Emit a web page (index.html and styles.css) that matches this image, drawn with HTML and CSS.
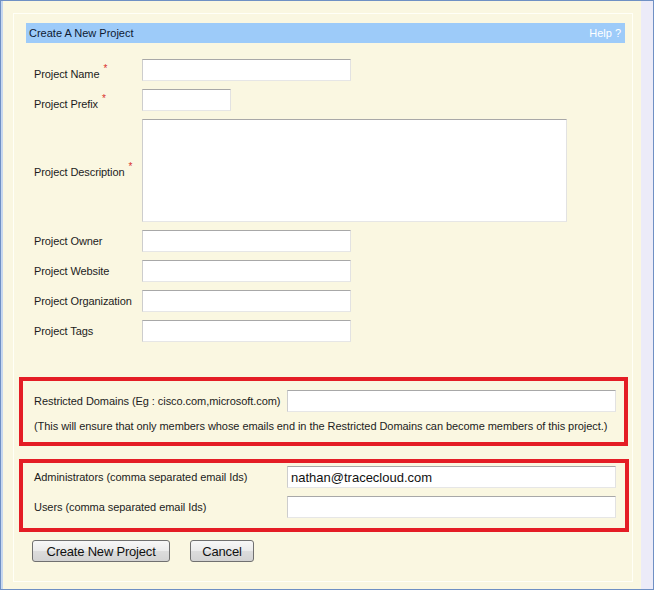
FILE: index.html
```html
<!DOCTYPE html>
<html>
<head>
<meta charset="utf-8">
<link rel="stylesheet" href="styles.css">
</head>
<body>
<div class="window">
  <div class="main">
    <div class="panel">
      <div class="header">
        <span class="title">Create A New Project</span>
        <span class="help">Help ?</span>
      </div>
      <div class="form">
        <div class="label req"><span>Project Name<span class="star">*</span></span></div>
        <div class="field"><input class="input w-md" type="text"></div>
        <div class="label req"><span>Project Prefix<span class="star">*</span></span></div>
        <div class="field"><input class="input w-sm" type="text"></div>
        <div class="label req-tall"><span>Project Description<span class="star">*</span></span></div>
        <div class="field"><textarea class="textarea"></textarea></div>
        <div class="label">Project Owner</div>
        <div class="field"><input class="input w-md" type="text"></div>
        <div class="label">Project Website</div>
        <div class="field"><input class="input w-md" type="text"></div>
        <div class="label">Project Organization</div>
        <div class="field"><input class="input w-md" type="text"></div>
        <div class="label">Project Tags</div>
        <div class="field"><input class="input w-md" type="text"></div>
      </div>
      <div class="redbox box-domains">
        <div class="boxrow">
          <div class="boxlabel">Restricted Domains (Eg : cisco.com,microsoft.com)</div>
          <input class="input w-lg" type="text">
        </div>
        <div class="note">(This will ensure that only members whose emails end in the Restricted Domains can become members of this project.)</div>
      </div>
      <div class="redbox box-members">
        <div class="boxrow">
          <div class="boxlabel">Administrators (comma separated email Ids)</div>
          <input class="input w-lg" type="text" value="nathan@tracecloud.com">
        </div>
        <div class="boxrow">
          <div class="boxlabel">Users (comma separated email Ids)</div>
          <input class="input w-lg" type="text">
        </div>
      </div>
      <div class="actions">
        <button class="btn btn-create" type="button">Create New Project</button>
        <button class="btn btn-cancel" type="button">Cancel</button>
      </div>
    </div>
  </div>
  <div class="strip"></div>
</div>
</body>
</html>
```

FILE: styles.css
```css
* { box-sizing: border-box; }
html, body { margin: 0; padding: 0; }
body {
  width: 654px;
  height: 590px;
  font-family: "Liberation Sans", Arial, sans-serif;
  font-size: 11px;
  color: #1c1c1c;
  background: #faf7e1;
  overflow: hidden;
}
.window {
  width: 654px;
  height: 590px;
  border: 1px solid #6f90c4;
  display: flex;
}
.main {
  flex: 1;
  background: #faf7e1;
  border-left: 2px solid #c6d7ef;
  padding: 12px 8px 7px 10px;
}
.strip {
  width: 12px;
  background: #ecebf8;
}
.panel {
  height: 100%;
  border: 1px solid #fffff7;
  background: #faf7e1;
  padding: 9px 4px 0 5px;
}
.header {
  height: 20px;
  margin: 0 3px 0 7px;
  background: #9dcbf9;
  display: flex;
  align-items: center;
  justify-content: space-between;
  padding: 0 4px 0 3px;
  font-size: 11px;
}
.title { color: #0e1a33; }
.help { color: #ffffff; }
.form {
  display: grid;
  grid-template-columns: 108px auto;
  row-gap: 8px;
  padding: 16px 0 0 15px;
  letter-spacing: -0.1px;
}
.label {
  display: flex;
  align-items: center;
}
.label.req { padding-top: 7px; }
.label.req-tall { padding-top: 3px; }
.star {
  color: #d9302c;
  font-size: 10px;
  line-height: 0;
  position: relative;
  top: -6px;
  margin-left: 4px;
}
.field { display: flex; }
.input, .textarea {
  height: 22px;
  border-style: solid;
  border-width: 1px;
  border-color: #a8a8a8 #e2e2e2 #e6e6e6 #cdcdcd;
  background: #ffffff;
  padding: 0 3px;
  margin: 0;
  font-family: "Liberation Sans", Arial, sans-serif;
  font-size: 13px;
  color: #111;
  outline: none;
}
.textarea { width: 425px; height: 103px; resize: none; }
.w-md { width: 209px; }
.w-sm { width: 89px; }
.w-lg { width: 329px; }
.redbox {
  border: 4px solid #e41d25;
  padding-left: 11px;
  letter-spacing: -0.06px;
}
.box-domains {
  margin-top: 35px;
  height: 69px;
  padding-top: 9px;
}
.box-members {
  margin-top: 13px;
  height: 73px;
  padding-top: 3px;
  display: flex;
  flex-direction: column;
  gap: 8px;
  margin-right: -1px;
}
.boxrow {
  display: flex;
  align-items: center;
}
.boxlabel { width: 253px; }
.note { margin-top: 8px; }
.actions {
  display: flex;
  gap: 20px;
  padding: 8px 0 0 13px;
}
.btn {
  height: 22px;
  border: 1px solid #707070;
  border-radius: 3px;
  background: linear-gradient(#f7f7f7, #ebebeb 50%, #dcdcdc 51%, #d3d3d3);
  font-family: "Liberation Sans", Arial, sans-serif;
  font-size: 13px;
  color: #111;
  padding: 0;
  letter-spacing: -0.2px;
}
.btn-create { width: 138px; }
.btn-cancel { width: 64px; }
```
